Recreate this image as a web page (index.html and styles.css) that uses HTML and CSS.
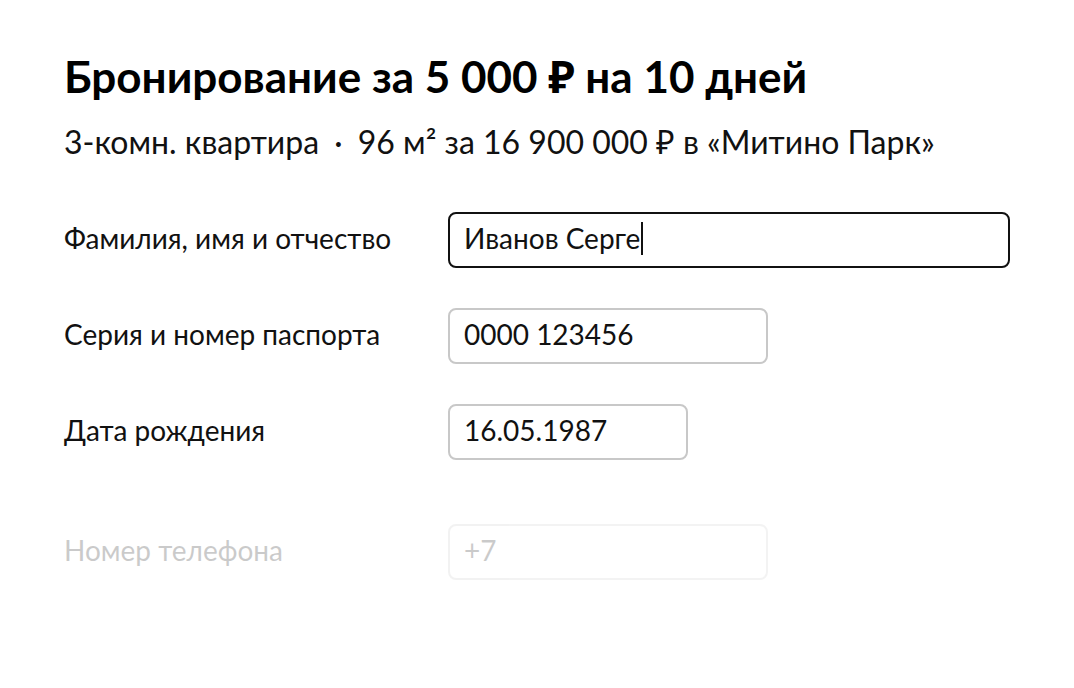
FILE: index.html
```html
<!DOCTYPE html>
<html lang="ru">
<head>
    <meta charset="UTF-8">
    <title>Бронирование</title>
    <link rel="stylesheet" href="styles.css">
</head>
<body>
    <div class="page">
        <h1 class="title">Бронирование за 5&nbsp;000&nbsp;₽ на 10 дней</h1>
        <p class="subtitle">3-комн. квартира <span class="dot">·</span> 96 м² за 16&nbsp;900&nbsp;000&nbsp;₽ в «Митино Парк»</p>

        <form class="form">
            <div class="row">
                <label class="label">Фамилия, имя и отчество</label>
                <div class="field field-wide field-active">Иванов Серге<span class="caret"></span></div>
            </div>
            <div class="row">
                <label class="label">Серия и номер паспорта</label>
                <div class="field field-mid">0000 123456</div>
            </div>
            <div class="row">
                <label class="label">Дата рождения</label>
                <div class="field field-short">16.05.1987</div>
            </div>
            <div class="row row-disabled">
                <label class="label">Номер телефона</label>
                <div class="field field-mid">+7</div>
            </div>
        </form>
    </div>
</body>
</html>
```

FILE: styles.css
```css
body { margin: 0; background: #fff; color: #111; font-family: Lato, "Noto Sans", sans-serif; }
.page { padding: 48px 64px 0; }
.title { margin: 0; font-size: 44px; font-weight: 700; line-height: 56px; color: #000; }
.subtitle { margin: 18px 0 0; font-size: 32px; line-height: 40px; color: #111; }
.dot { margin: 0 7px; }
.form { margin-top: 50px; display: flex; flex-direction: column; gap: 40px; }
.row { display: grid; grid-template-columns: 384px auto; align-items: center; }
.row-disabled { margin-top: 24px; opacity: 0.22; }
.label { padding-bottom: 4px; font-size: 28px; color: #111; }
.field { box-sizing: border-box; height: 56px; padding: 0 14px 4px; display: flex; align-items: center; font-size: 28px; color: #111; border: 2px solid #c8c8c8; border-radius: 8px; }
.field-active { border-color: #111; }
.field-wide { width: 562px; }
.field-mid { width: 320px; }
.field-short { width: 240px; }
.caret { display: inline-block; width: 2px; height: 33px; margin-left: 1px; background: #111; }
```
